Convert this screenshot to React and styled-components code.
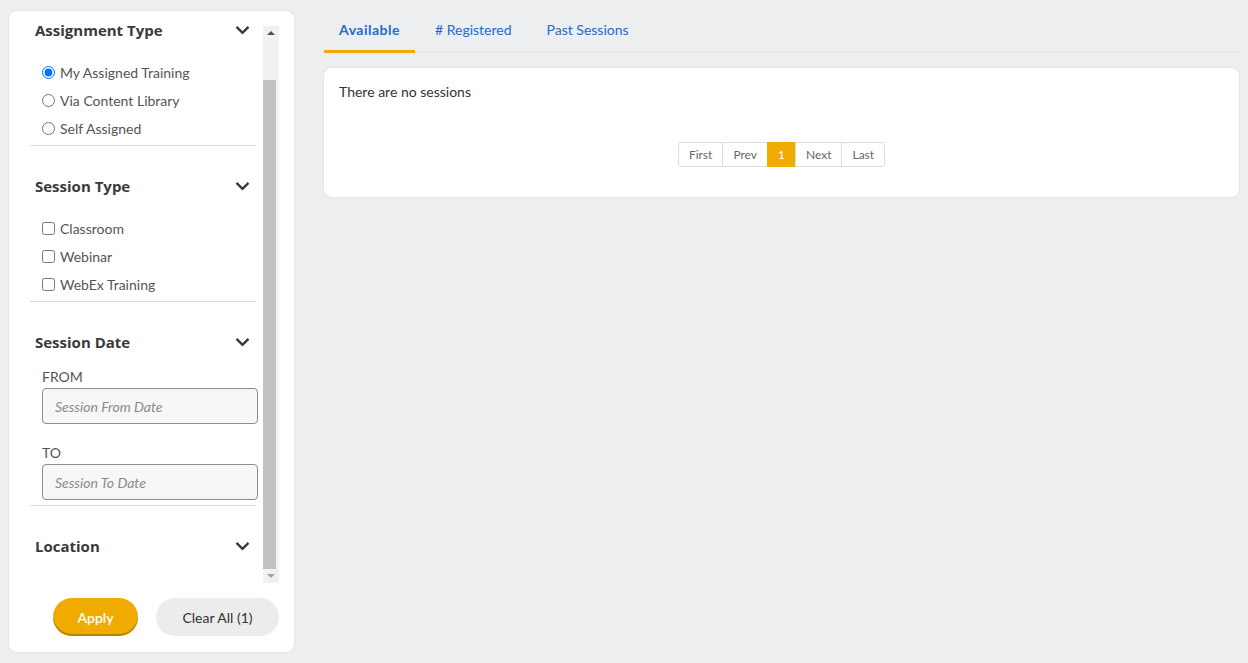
import React from "react";
import styled, { createGlobalStyle } from "styled-components";

const GlobalStyle = createGlobalStyle`
  html, body {
    margin: 0;
    padding: 0;
    background: #edeef0;
    font-family: Lato, "Liberation Sans", sans-serif;
  }
  * {
    box-sizing: border-box;
  }
`;

const Page = styled.div`
  display: flex;
  align-items: flex-start;
  gap: 30px;
  padding: 11px 9px 11px 9px;
  min-height: 663px;
`;

const Sidebar = styled.aside`
  width: 285px;
  height: 641px;
  flex-shrink: 0;
  background: #fff;
  border-radius: 8px;
  box-shadow: 0 0 2px rgba(0, 0, 0, 0.12);
  padding: 3px 15px 16px 21px;
  display: flex;
  flex-direction: column;
`;

const ScrollRow = styled.div`
  display: flex;
  gap: 5px;
  height: 569px;
`;

const FilterColumn = styled.div`
  width: 228px;
  overflow: hidden;
`;

const Scrollbar = styled.div`
  width: 16px;
  margin-top: 12px;
  background: #f1f1f1;
  display: flex;
  flex-direction: column;
  align-items: center;
`;

const ScrollArrow = styled.div`
  height: 14px;
  width: 100%;
  display: flex;
  align-items: center;
  justify-content: center;
  &::before {
    content: "";
    border-left: 4px solid transparent;
    border-right: 4px solid transparent;
    ${({ $down }) =>
      $down ? "border-top: 4px solid #a3a3a3;" : "border-bottom: 4px solid #505050;"}
  }
`;

const ScrollThumb = styled.div`
  width: 13px;
  align-self: flex-start;
  margin-top: 40px;
  flex: 1;
  background: #c1c1c1;
`;

const Section = styled.section`
  border-bottom: 1px solid #dcdcdc;
  margin-right: 2px;
  padding-bottom: ${({ $pb }) => $pb}px;
  & + & {
    margin-top: 24px;
  }
`;

const SectionHeader = styled.div`
  height: 32px;
  display: flex;
  align-items: center;
  justify-content: space-between;
  padding: 0 6px 0 5px;
  font-family: "Open Sans", Lato, sans-serif;
  font-size: 15px;
  font-weight: 700;
  color: #3a3a3a;
  margin-bottom: ${({ $mb = 12 }) => $mb}px;
`;

const OptionRow = styled.label`
  display: flex;
  align-items: center;
  height: 28px;
  padding-left: 12px;
  font-size: 14px;
  color: #555;
  input {
    margin: 0 5px 0 0;
    width: 13px;
    height: 13px;
  }
`;

const FieldLabel = styled.div`
  padding-left: 12px;
  height: 18px;
  line-height: 18px;
  font-size: 14px;
  color: #555;
  margin-top: ${({ $mt }) => $mt}px;
`;

const DateInput = styled.input`
  display: block;
  margin: ${({ $mt }) => $mt}px 0 0 12px;
  width: 216px;
  height: 36px;
  border: 1px solid #8c8c8c;
  border-radius: 4px;
  background: #f7f7f7;
  padding: 0 12px;
  font-family: inherit;
  font-size: 14px;
  &::placeholder {
    color: #8a8a8a;
    font-style: italic;
  }
`;

const ButtonRow = styled.div`
  display: flex;
  justify-content: flex-end;
  gap: 18px;
  margin-top: 15px;
`;

const PillButton = styled.button`
  height: 38px;
  border-radius: 19px;
  border: none;
  font-family: inherit;
  font-size: 14px;
  cursor: pointer;
  width: ${({ $w }) => $w}px;
  background: ${({ $primary }) => ($primary ? "#f0ab00" : "#ececec")};
  color: ${({ $primary }) => ($primary ? "#fff" : "#333")};
  font-weight: ${({ $primary }) => ($primary ? 600 : 400)};
  box-shadow: ${({ $primary }) => ($primary ? "inset 0 -2px 0 #b98400" : "none")};
`;

const Main = styled.main`
  flex: 1;
  margin-top: -11px;
`;

const TabBar = styled.nav`
  display: flex;
  gap: 5px;
  padding-top: 9px;
  border-bottom: 2px solid #e4e5e7;
`;

const Tab = styled.div`
  height: 44px;
  padding: 0 15px 1px;
  display: flex;
  align-items: center;
  font-size: 14px;
  color: #1f6acb;
  font-weight: ${({ $active }) => ($active ? 700 : 400)};
  letter-spacing: ${({ $active }) => ($active ? "0.5px" : "0")};
  border-bottom: 3px solid ${({ $active }) => ($active ? "#f0ab00" : "transparent")};
  margin-bottom: -2px;
`;

const Card = styled.div`
  margin-top: 15px;
  background: #fff;
  border-radius: 8px;
  box-shadow: 0 0 2px rgba(0, 0, 0, 0.12);
  height: 129px;
  padding: 15px 15px;
`;

const EmptyText = styled.div`
  font-size: 14px;
  color: #333;
  line-height: 18px;
`;

const Pager = styled.div`
  display: flex;
  justify-content: center;
  margin-top: 41px;
`;

const PageButton = styled.div`
  height: 25px;
  padding: 0 ${({ $px }) => $px}px;
  display: flex;
  align-items: center;
  font-size: 12px;
  color: ${({ $active }) => ($active ? "#fff" : "#666")};
  background: ${({ $active }) => ($active ? "#f0ab00" : "#fff")};
  border: 1px solid ${({ $active }) => ($active ? "#f0ab00" : "#dddddd")};
  margin-left: -1px;
  &:first-child {
    border-radius: 3px 0 0 3px;
    margin-left: 0;
  }
  &:last-child {
    border-radius: 0 3px 3px 0;
  }
`;

const Chevron = () => (
  <svg width="15" height="10" viewBox="0 0 15 10">
    <path d="M1.5 1.8 L7.5 7.8 L13.5 1.8" fill="none" stroke="#3a3a3a" strokeWidth="2.4" />
  </svg>
);

const App = () => {
  return (
    <>
      <GlobalStyle />
      <Page>
        <Sidebar>
          <ScrollRow>
            <FilterColumn>
              <Section $pb={3}>
                <SectionHeader>
                  Assignment Type
                  <Chevron />
                </SectionHeader>
                <OptionRow>
                  <input type="radio" name="assign" defaultChecked /> My Assigned Training
                </OptionRow>
                <OptionRow>
                  <input type="radio" name="assign" /> Via Content Library
                </OptionRow>
                <OptionRow>
                  <input type="radio" name="assign" /> Self Assigned
                </OptionRow>
              </Section>
              <Section $pb={3}>
                <SectionHeader>
                  Session Type
                  <Chevron />
                </SectionHeader>
                <OptionRow>
                  <input type="checkbox" /> Classroom
                </OptionRow>
                <OptionRow>
                  <input type="checkbox" /> Webinar
                </OptionRow>
                <OptionRow>
                  <input type="checkbox" /> WebEx Training
                </OptionRow>
              </Section>
              <Section $pb={5}>
                <SectionHeader $mb={0}>
                  Session Date
                  <Chevron />
                </SectionHeader>
                <FieldLabel $mt={10}>FROM</FieldLabel>
                <DateInput $mt={2} placeholder="Session From Date" />
                <FieldLabel $mt={20}>TO</FieldLabel>
                <DateInput $mt={2} placeholder="Session To Date" />
              </Section>
              <Section $pb={40}>
                <SectionHeader>
                  Location
                  <Chevron />
                </SectionHeader>
              </Section>
            </FilterColumn>
            <Scrollbar>
              <ScrollArrow />
              <ScrollThumb />
              <ScrollArrow $down />
            </Scrollbar>
          </ScrollRow>
          <ButtonRow>
            <PillButton $primary $w={85}>Apply</PillButton>
            <PillButton $w={123}>Clear All (1)</PillButton>
          </ButtonRow>
        </Sidebar>
        <Main>
          <TabBar>
            <Tab $active>Available</Tab>
            <Tab># Registered</Tab>
            <Tab>Past Sessions</Tab>
          </TabBar>
          <Card>
            <EmptyText>There are no sessions</EmptyText>
            <Pager>
              <PageButton $px={10}>First</PageButton>
              <PageButton $px={10}>Prev</PageButton>
              <PageButton $px={10} $active>1</PageButton>
              <PageButton $px={10}>Next</PageButton>
              <PageButton $px={10}>Last</PageButton>
            </Pager>
          </Card>
        </Main>
      </Page>
    </>
  );
};

export default App;
